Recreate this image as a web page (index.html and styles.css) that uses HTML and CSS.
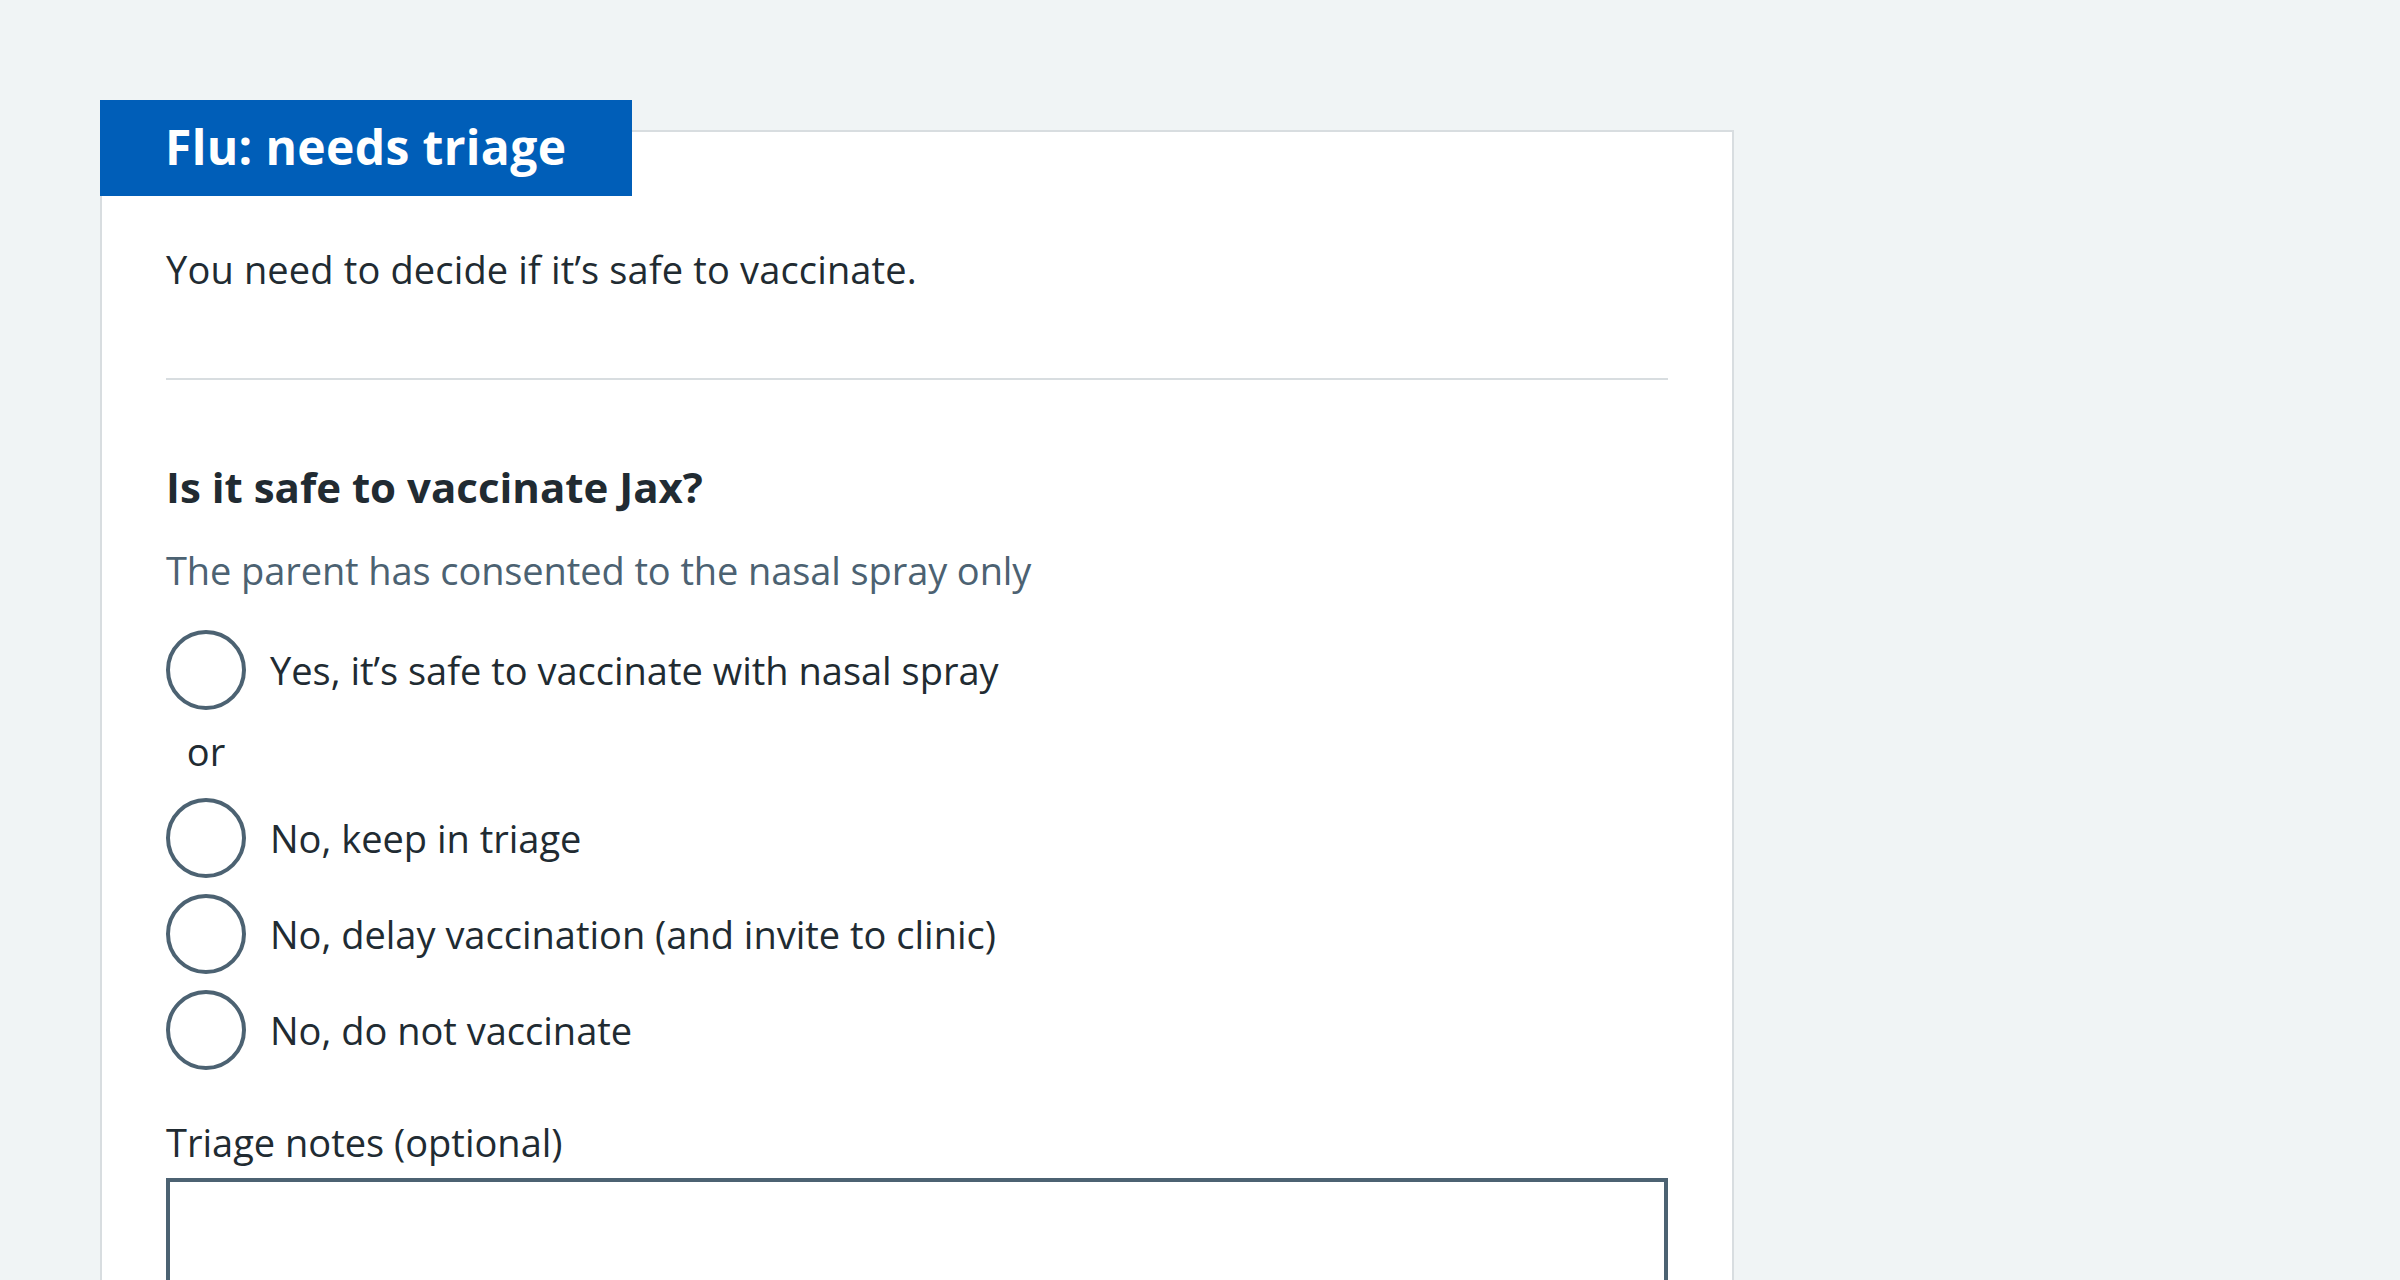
FILE: index.html
```html
<!DOCTYPE html>
<html lang="en">
<head>
<meta charset="utf-8">
<title>Flu: needs triage</title>
<link rel="stylesheet" href="styles.css">
</head>
<body>
<main class="page">
  <section class="card">
    <h2 class="card-tag">Flu: needs triage</h2>
    <p class="card-intro">You need to decide if it’s safe to vaccinate.</p>
    <hr class="divider">
    <form class="triage-form">
      <fieldset class="fieldset">
        <legend class="legend">Is it safe to vaccinate Jax?</legend>
        <div class="hint">The parent has consented to the nasal spray only</div>
        <div class="radios">
          <div class="radio-item">
            <input class="radio-input" type="radio" name="triage" id="r1">
            <label class="radio-label" for="r1">Yes, it’s safe to vaccinate with nasal spray</label>
          </div>
          <div class="radio-divider">or</div>
          <div class="radio-item">
            <input class="radio-input" type="radio" name="triage" id="r2">
            <label class="radio-label" for="r2">No, keep in triage</label>
          </div>
          <div class="radio-item">
            <input class="radio-input" type="radio" name="triage" id="r3">
            <label class="radio-label" for="r3">No, delay vaccination (and invite to clinic)</label>
          </div>
          <div class="radio-item">
            <input class="radio-input" type="radio" name="triage" id="r4">
            <label class="radio-label" for="r4">No, do not vaccinate</label>
          </div>
        </div>
      </fieldset>
      <div class="form-group">
        <label class="field-label" for="notes">Triage notes (optional)</label>
        <textarea class="textarea" id="notes" rows="5"></textarea>
      </div>
    </form>
  </section>
</main>
</body>
</html>
```

FILE: styles.css
```css
html, body {
  margin: 0;
  padding: 0;
}

body {
  background: #f0f4f5;
  color: #212b32;
  font-family: "Open Sans", "Noto Sans", "Liberation Sans", sans-serif;
  font-size: 38px;
  line-height: 56px;
}

.page {
  padding: 130px 0 0 100px;
}

.card {
  width: 1634px;
  box-sizing: border-box;
  background: #ffffff;
  border: 2px solid #d8dde0;
  padding: 0 64px 64px 64px;
}

.card-tag {
  width: fit-content;
  margin: -32px 0 45px -66px;
  padding: 15px 66px 17px 65px;
  background: #005eb8;
  color: #ffffff;
  font-size: 48px;
  line-height: 64px;
  font-weight: 700;
  letter-spacing: 0.35px;
}

.card-intro {
  margin: 0 0 81px 0;
  letter-spacing: 0.15px;
}

.divider {
  margin: 0;
  border: 0;
  height: 2px;
  background: #d8dde0;
}

.triage-form {
  margin: 0;
}

.fieldset {
  margin: 0;
  padding: 0;
  border: 0;
  min-width: 0;
}

.legend {
  padding: 0;
  margin: 79px 0 27px 0;
  font-size: 42px;
  line-height: 56px;
  font-weight: 700;
  float: left;
  width: 100%;
}

.hint {
  clear: both;
  color: #4c6272;
  margin: 0 0 32px 0;
  letter-spacing: -0.1px;
}

.radios {
  margin-bottom: 44px;
}

.radio-item {
  display: flex;
  align-items: flex-start;
  margin-bottom: 16px;
}

.radio-item:last-child {
  margin-bottom: 0;
}

.radio-input {
  appearance: none;
  -webkit-appearance: none;
  flex: 0 0 auto;
  width: 80px;
  height: 80px;
  margin: 0;
  box-sizing: border-box;
  border: 4px solid #4c6272;
  border-radius: 50%;
  background: #ffffff;
}

.radio-label {
  padding: 12px 24px 12px 24px;
}

.radio-divider {
  width: 80px;
  text-align: center;
  margin: -3px 0 19px 0;
}

.form-group {
  margin: 0;
}

.field-label {
  display: block;
  margin-bottom: 8px;
}

.textarea {
  display: block;
  width: 100%;
  height: 240px;
  box-sizing: border-box;
  margin: 0;
  border: 4px solid #4c6272;
  border-radius: 0;
  resize: none;
  font-family: inherit;
  font-size: 38px;
  background: #ffffff;
}
```
